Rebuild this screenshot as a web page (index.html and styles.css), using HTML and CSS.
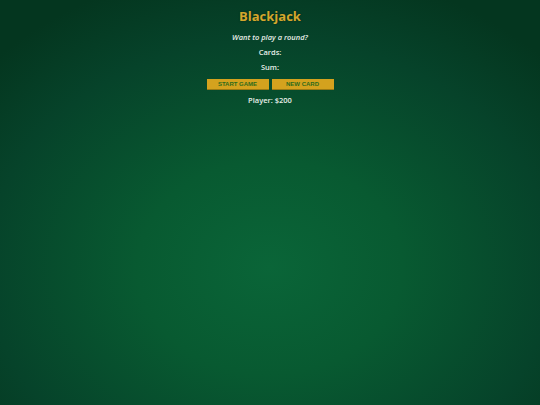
FILE: index.html
```html
<!DOCTYPE html>
<html>
<head>
<meta charset="utf-8">
<link rel="stylesheet" href="styles.css">
</head>
<body>
<main class="table">
  <h1 class="title">Blackjack</h1>
  <p class="message">Want to play a round?</p>
  <p class="line">Cards:</p>
  <p class="line">Sum:</p>
  <div class="actions">
    <button class="btn">START GAME</button>
    <button class="btn">NEW CARD</button>
  </div>
  <p class="line">Player: $200</p>
</main>
</body>
</html>
```
FILE: styles.css
```css
html, body {
  margin: 0;
  height: 100%;
}
body {
  background: radial-gradient(ellipse 70% 75% at 50% 66%, #0a6538 0%, #085a31 35%, #06432a 75%, #04361f 100%);
  font-family: "Open Sans", "DejaVu Sans", sans-serif;
  color: #e8efe8;
  text-align: center;
}
.table {
  display: flex;
  flex-direction: column;
  align-items: center;
  padding-top: 7px;
}
.title {
  margin: 0;
  font-size: 13px;
  line-height: 18px;
  font-weight: 700;
  color: #d4a72c;
  text-shadow: 0 0 2px rgba(0,0,0,0.4);
}
.message {
  margin: 7px 0 0;
  font-size: 7.5px;
  line-height: 10px;
  font-style: italic;
  font-weight: 600;
}
.line {
  margin: 5px 0 0;
  font-size: 7.5px;
  line-height: 10px;
  font-weight: 600;
}
.actions {
  display: flex;
  gap: 3px;
  margin-top: 7px;
}
.btn {
  width: 62px;
  height: 11px;
  padding: 0;
  border: none;
  border-bottom: 1px solid #9a7a14;
  background: #d4a21e;
  color: #2e6b1c;
  font-family: "Liberation Sans", Arial, sans-serif;
  font-weight: 700;
  font-size: 6px;
}
```
